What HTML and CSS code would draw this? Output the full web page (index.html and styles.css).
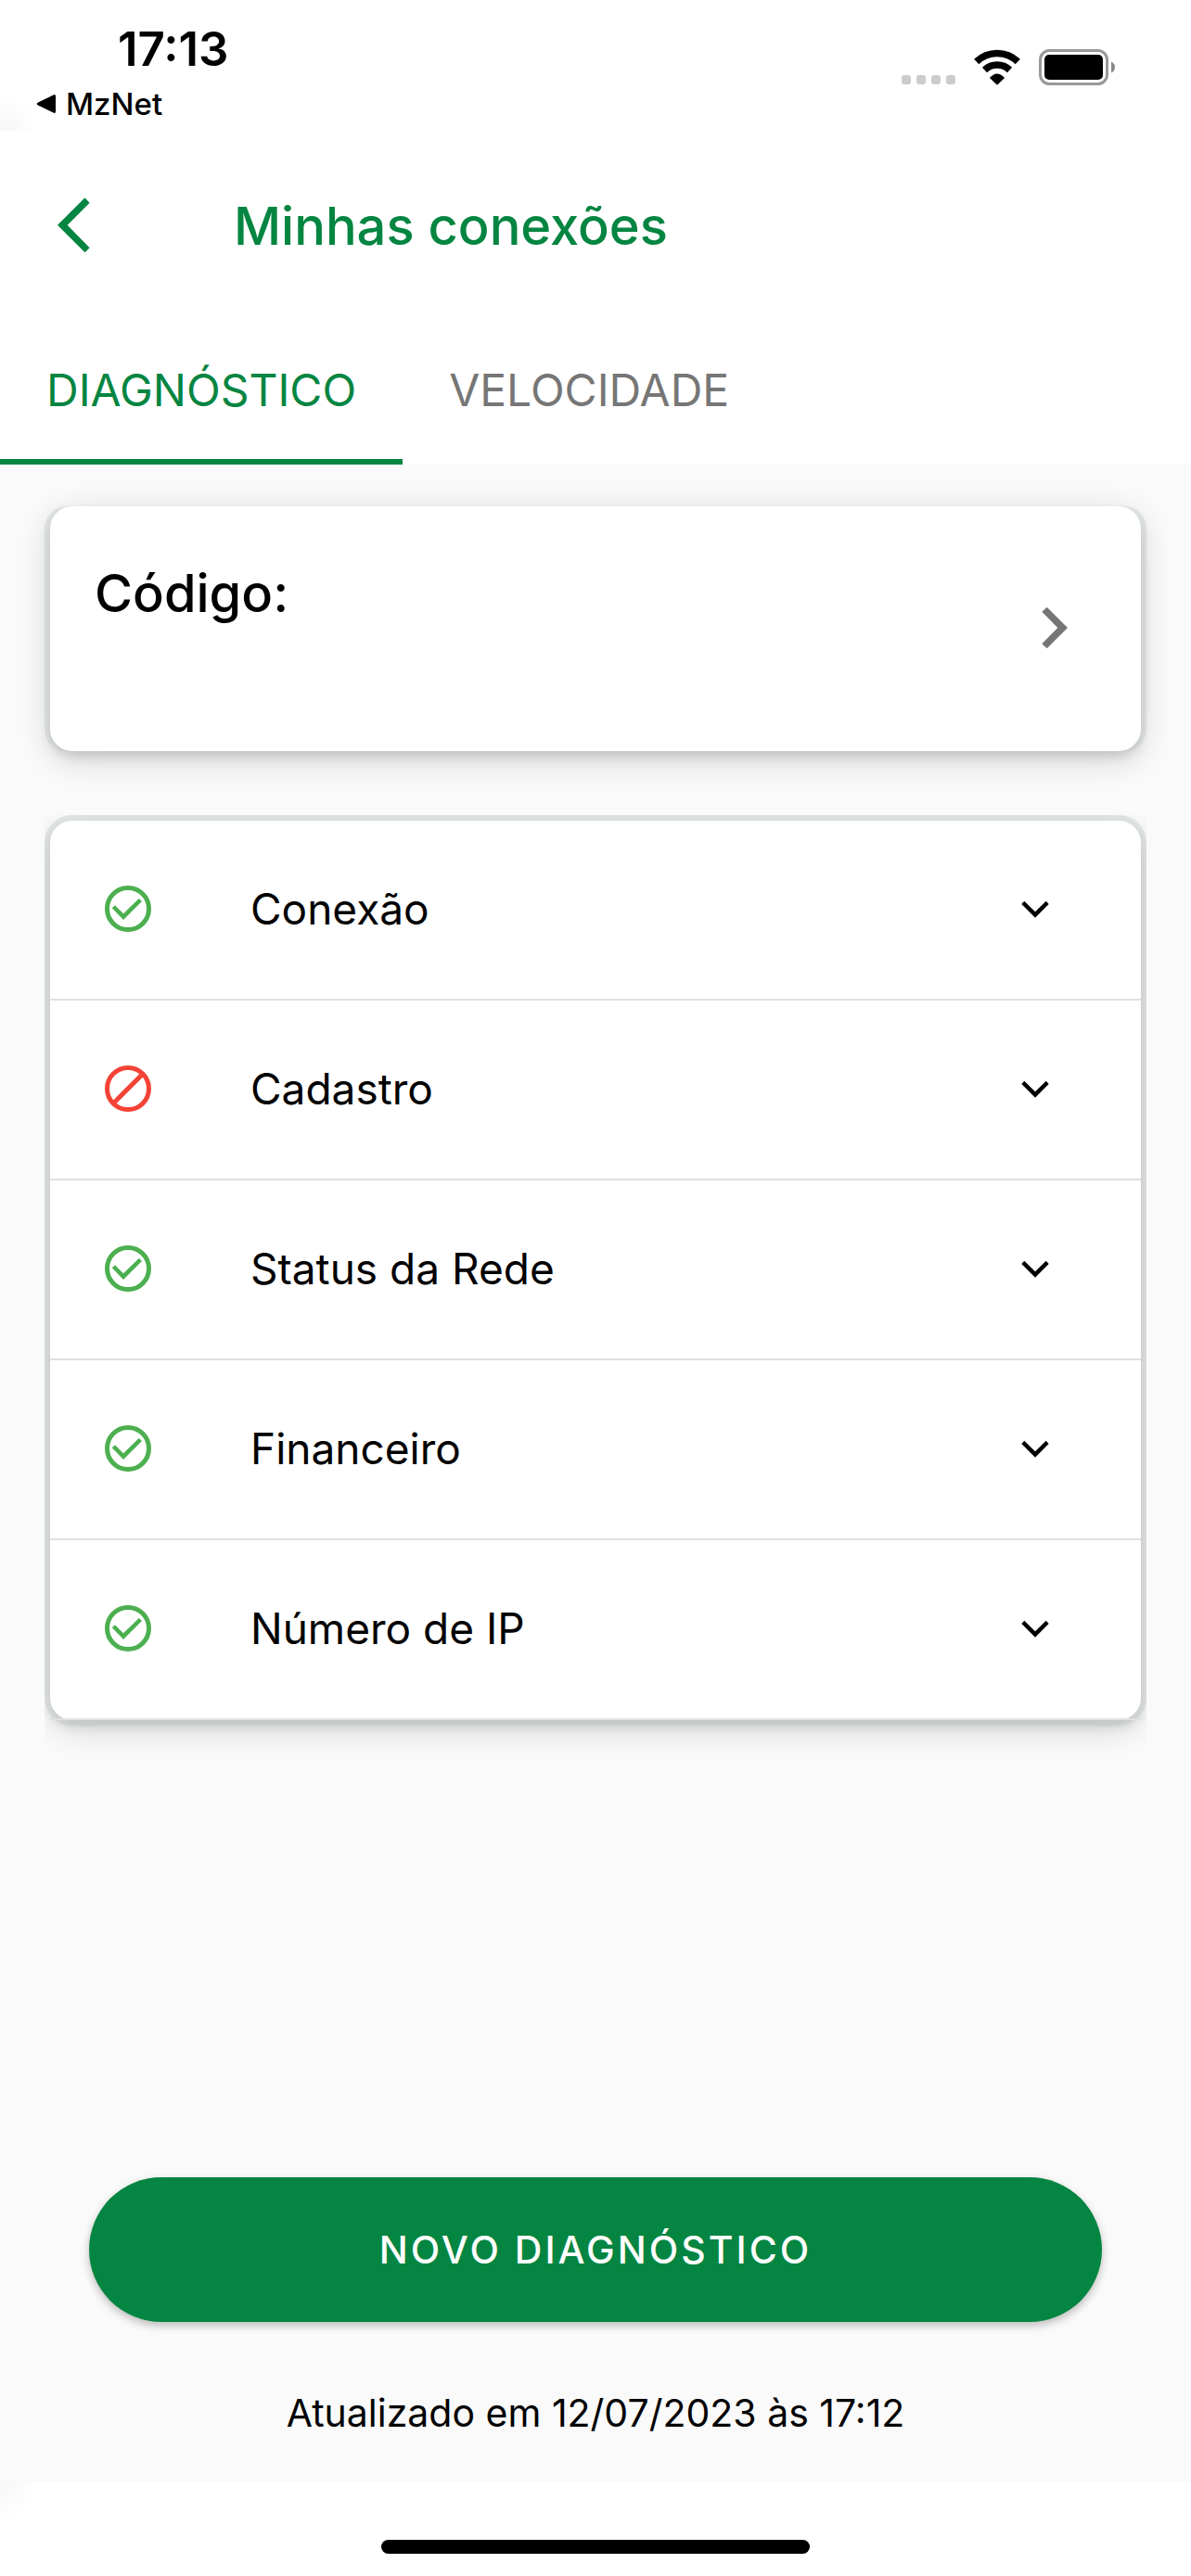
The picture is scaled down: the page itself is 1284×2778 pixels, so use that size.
FILE: index.html
```html
<!DOCTYPE html>
<html lang="pt-BR">
<head>
<meta charset="utf-8">
<meta name="viewport" content="width=device-width, initial-scale=1">
<title>Minhas conexões</title>
<link rel="stylesheet" href="styles.css">
</head>
<body>
  <!-- icons used more than once -->
  <svg class="sprite" aria-hidden="true">
    <symbol id="ok" viewBox="0 0 24 24">
      <circle cx="12" cy="12" r="9" fill="none" stroke="currentColor" stroke-width="2"/>
      <path fill="currentColor" d="M16.7 7.6 10 14.1 6.4 10.5 5.1 11.7 10 16.8 18 8.8z"/>
    </symbol>
    <symbol id="blocked" viewBox="0 0 24 24">
      <path fill="none" stroke="currentColor" stroke-width="2" d="M12 3a9 9 0 1 0 0 18 9 9 0 0 0 0-18zM5.7 18.3 18.3 5.7"/>
    </symbol>
    <symbol id="down" viewBox="0 0 60 60">
      <path fill="currentColor" d="M15.3 25 18.3 21.7 30 33.3 41.7 21.7 44.7 25 30 39.7z"/>
    </symbol>
  </svg>

  <div class="statusbar">
    <div class="status-left">
      <div class="time">17:13</div>
      <a class="back-app" href="#">
        <svg width="22" height="22" viewBox="0 0 22 22"><path d="M2 9.5 19 1.2Q21 .5 21 3V19Q21 21.500 19 20.800L2 12.500Q-.5 11 2 9.500z"/></svg>
        MzNet
      </a>
    </div>
    <div class="status-right">
      <svg width="58" height="40" viewBox="0 0 58 40" fill="#ccc">
        <rect x="0" y="28" width="10" height="10" rx="3"/>
        <rect x="16" y="28" width="10" height="10" rx="3"/>
        <rect x="32" y="28" width="10" height="10" rx="3"/>
        <rect x="48" y="28" width="10" height="10" rx="3"/>
      </svg>
      <svg width="50" height="40" viewBox="0 0 50 40">
        <g fill="none" stroke="#000" stroke-width="7.500">
          <path d="M2.700 13.500A32 32 0 0 1 47.300 13.500"/>
          <path d="M11.500 22.500A19.500 19.500 0 0 1 38.500 22.500"/>
        </g>
        <path d="M17.500 30.300Q25 22.500 32.500 30.300L33 31 25.800 37.900Q25 38.500 24.200 37.900L17 31z"/>
      </svg>
      <svg width="83" height="40" viewBox="0 0 83 40">
        <rect x="1.500" y="1.500" width="72" height="36" rx="10" fill="none" stroke="#999" stroke-width="3"/>
        <rect x="6" y="6" width="63" height="27" rx="5"/>
        <path fill="#888" d="M78 13.500Q82 15.500 82 19.500T78 25.500z"/>
      </svg>
    </div>
  </div>

  <header class="toolbar">
    <button class="btn-back" type="button" aria-label="Voltar">
      <svg width="63" height="63" viewBox="0 0 63 63"><path fill="currentColor" d="M43.500 1.300 48.600 6.700 24.700 30.700 48.600 55.300 43.500 60.300 14 30.700z"/></svg>
    </button>
    <h1>Minhas conexões</h1>
  </header>

  <nav class="tabs" role="tablist">
    <button class="tab active" type="button" role="tab" aria-selected="true">DIAGNÓSTICO</button>
    <button class="tab" type="button" role="tab" aria-selected="false">VELOCIDADE</button>
  </nav>

  <main>
    <a class="card code" href="#">
      <h2>Código:</h2>
      <svg width="60" height="60" viewBox="0 0 60 60"><path fill="#757575" d="M15.300 12.700 20.700 7.700 43 30 20.700 52.300 15.300 47.300 32.300 30z"/></svg>
    </a>

    <div class="list-wrap">
      <div class="card list">
        <button class="item" type="button">
          <svg class="ok"><use href="#ok"/></svg>
          <span>Conexão</span>
          <svg><use href="#down"/></svg>
        </button>
        <button class="item" type="button">
          <svg class="blocked"><use href="#blocked"/></svg>
          <span>Cadastro</span>
          <svg><use href="#down"/></svg>
        </button>
        <button class="item" type="button">
          <svg class="ok"><use href="#ok"/></svg>
          <span>Status da Rede</span>
          <svg><use href="#down"/></svg>
        </button>
        <button class="item" type="button">
          <svg class="ok"><use href="#ok"/></svg>
          <span>Financeiro</span>
          <svg><use href="#down"/></svg>
        </button>
        <button class="item" type="button">
          <svg class="ok"><use href="#ok"/></svg>
          <span>Número de IP</span>
          <svg><use href="#down"/></svg>
        </button>
      </div>
    </div>

    <div class="actions">
      <button class="btn-new" type="button">NOVO DIAGNÓSTICO</button>
      <p>Atualizado em 12/07/2023 às 17:12</p>
    </div>
  </main>

  <div class="home-area">
    <div class="home-bar"></div>
  </div>
</body>
</html>
```
FILE: styles.css
```css
* {
  box-sizing: border-box;
}

body {
  margin: 0;
  min-height: 100vh;
  display: flex;
  flex-direction: column;
  background-color: #fff;
  color: #000;
  font-family: Inter, "Liberation Sans", sans-serif;
  font-size: 48px;
}

button {
  border: none;
  background: none;
  padding: 0;
  margin: 0;
  font: inherit;
  color: inherit;
  cursor: pointer;
}

a {
  color: inherit;
  text-decoration: none;
}

svg {
  display: block;
  flex: none;
}

.sprite {
  display: none;
}

/* status bar */
.statusbar {
  height: 141px;
  display: flex;
  justify-content: space-between;
  padding: 23px 81px 0 39px;
  background: radial-gradient(circle at 0 100%, #f6f6f6, #fff 40px);
}

.time {
  padding-left: 88px;
  font-size: 51px;
  font-weight: 600;
  line-height: 60px;
}

.back-app {
  display: flex;
  align-items: center;
  gap: 10px;
  margin-top: 8px;
  font-size: 33px;
  font-weight: 500;
  line-height: 42px;
}

.status-right {
  display: flex;
  gap: 20px;
  padding-top: 30px;
}

/* toolbar */
.toolbar {
  height: 205px;
  display: flex;
  align-items: center;
  gap: 141px;
  padding: 0 48px;
  color: #048541;
}

h1, h2 {
  margin: 0;
  font-size: 56px;
  font-weight: 500;
  line-height: 72px;
}

.tabs {
  display: flex;
}

.tab {
  height: 155px;
  padding: 0 50px;
  border-bottom: 6px solid transparent;
  color: #767676;
}

.tab.active {
  color: #048541;
  border-bottom-color: #048541;
}

/* content */
main {
  flex: 1;
  display: flex;
  flex-direction: column;
  background-color: #fafafa;
  padding: 45px 48px 44px;
}

.card {
  background-color: #fff;
  border-radius: 24px;
  margin: 0 6px;
}

.code {
  height: 264px;
  display: flex;
  align-items: center;
  justify-content: space-between;
  padding: 0 62px 2px 48px;
  box-shadow: 6px 0 rgba(190, 200, 200, .4), -6px 0 rgba(190, 200, 200, .4), 0 9px 36px rgba(0, 0, 0, .16), 0 6px 12px rgba(0, 0, 0, .12);
}

.code h2 {
  align-self: flex-start;
  margin-top: 58px;
}

/* the list shadow only shows under the card */
.list-wrap {
  margin-top: 69px;
  padding: 6px 0;
  clip-path: inset(0 0 -60px 0);
}

.list {
  box-shadow: 0 0 0 6px rgba(190, 200, 200, .4), 0 9px 36px rgba(0, 0, 0, .16), 0 6px 12px rgba(0, 0, 0, .12);
}

.item {
  width: 100%;
  height: 194px;
  display: flex;
  align-items: center;
  padding: 0 84px 2px 54px;
  border-bottom: 2px solid #e0e0e0;
  font-size: 46px;
  text-align: left;
}

.item svg {
  width: 60px;
  height: 60px;
}

.item span {
  flex: 1;
  margin-left: 102px;
}

.ok {
  color: #4caf50;
}

.blocked {
  color: #f44336;
}

.actions {
  margin-top: auto;
  padding: 0 48px;
  font-size: 41px;
  text-align: center;
}

.btn-new {
  width: 100%;
  height: 156px;
  border-radius: 78px;
  background-color: #048541;
  color: #fff;
  font-weight: 500;
  letter-spacing: 3px;
  box-shadow: 0 4px 10px rgba(0, 0, 0, .25);
}

.actions p {
  margin: 68px 0 0;
  line-height: 60px;
}

/* home indicator */
.home-area {
  height: 102px;
  padding-top: 63px;
  background: radial-gradient(circle at 0 0, #f6f6f6, #fff 40px);
}

.home-bar {
  width: 36%;
  height: 15px;
  margin: 0 auto;
  border-radius: 8px;
  background-color: #000;
}
```
